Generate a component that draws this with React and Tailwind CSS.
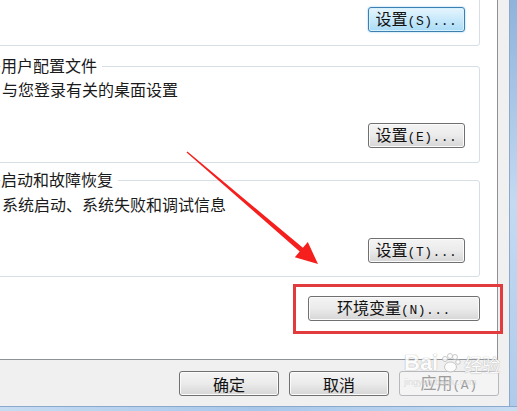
import React from "react";

function WinButton({ label, hotkey, variant = "normal", width = "w-[97px]" }) {
  const look =
    variant === "focus"
      ? "border-[#3c7fb1] bg-gradient-to-b from-[#e6f5fd] via-[#c8e9fb] to-[#a9dbf6] shadow-[inset_0_0_0_1px_#d9f1fd,0_0_2px_#7ec6ef] text-[#111]"
      : variant === "disabled"
      ? "border-[#b7b9bc] bg-[#f4f4f4] text-[#9c9c9c]"
      : "border-[#707070] bg-gradient-to-b from-[#f4f4f4] via-[#ebebeb] to-[#d6d6d6] shadow-[inset_0_0_0_1px_#fbfbfb] text-[#111]";
  return (
    <button
      className={`${width} h-[25px] shrink-0 rounded-[3px] border flex items-center justify-center text-[16px] ${look}`}
    >
      <span className="leading-[18px]">
        {label}
        {hotkey && (
          <span className="font-['Liberation_Mono',monospace] text-[13px] tracking-[0.5px]">
            {hotkey}
          </span>
        )}
      </span>
    </button>
  );
}

function GroupBox({ title, desc, button, className = "" }) {
  return (
    <div
      className={`relative -ml-3 mr-[17px] border border-[#d5dfe5] rounded-[3px] flex flex-col pl-[13px] pr-[14px] ${className}`}
    >
      {title && (
        <span className="absolute left-[12px] -top-[10px] bg-white pr-[5px] text-[16px] leading-[16px] text-[#1a1a1a]">
          {title}
        </span>
      )}
      {desc && <div className="text-[16px] leading-[16px] text-[#1a1a1a]">{desc}</div>}
      <div className="flex justify-end">{button}</div>
    </div>
  );
}

export default function App() {
  return (
    <div className="relative w-[517px] h-[411px] overflow-hidden flex flex-col bg-[#b8d3ee] font-['Noto_Sans_CJK_SC',sans-serif]">
      <div className="flex h-[406px]">
        <div className="w-[509px] bg-[#f0f0f0] flex flex-col">
          <div className="w-[498px] h-[360px] bg-white border-r border-b border-[#8e9196] flex flex-col">
            <GroupBox
              className="-mt-[20px] pt-[26px] pb-[13px]"
              button={<WinButton label="设置" hotkey="(S)..." variant="focus" />}
            />
            <GroupBox
              className="mt-[20px] pt-[14px] pb-[14px]"
              title="用户配置文件"
              desc="与您登录有关的桌面设置"
              button={
                <div className="mt-[26px]">
                  <WinButton label="设置" hotkey="(E)..." />
                </div>
              }
            />
            <GroupBox
              className="mt-[17px] pt-[15px] pb-[13px]"
              title="启动和故障恢复"
              desc="系统启动、系统失败和调试信息"
              button={
                <div className="mt-[26px]">
                  <WinButton label="设置" hotkey="(T)..." />
                </div>
              }
            />
            <div className="mt-[19px] mr-[17px] flex justify-end">
              <WinButton label="环境变量" hotkey="(N)..." width="w-[172px]" />
            </div>
          </div>
          <div className="flex justify-end gap-[10px] pt-[11px] pr-[10px]">
            <WinButton label="确定" width="w-[100px]" />
            <WinButton label="取消" width="w-[100px]" />
            <WinButton label="应用" hotkey="(A)" variant="disabled" width="w-[100px]" />
          </div>
        </div>
        <div className="flex-1 border-l border-[#8aa9cc] bg-gradient-to-b from-[#8fb3dc] via-[#c3daf1] to-[#aecbeb]" />
      </div>
      <div className="flex-1 border-t border-[#8aa9cc] bg-gradient-to-r from-[#c6dcf2] via-[#a7c7ea] to-[#c6dcf2]" />

      {/* red highlight box */}
      <div className="absolute left-[293px] top-[284px] w-[210px] h-[50px] border-[3px] border-[#e23b3d]" />

      {/* red arrow */}
      <svg className="absolute left-0 top-0 pointer-events-none" width="517" height="411">
        <polygon
          fill="#f5201d"
          points="187.4,151.5 302.9,247.8 307.8,242.1 318,264 294.8,257.3 299.7,251.6 186.6,152.5"
        />
      </svg>

      {/* watermark */}
      <div className="absolute left-[404px] top-[352px] flex flex-col items-start pointer-events-none opacity-80">
        <div className="flex items-end gap-[2px]">
          <span className="font-['Liberation_Sans',sans-serif] text-[22px] leading-[22px] font-bold text-white [text-shadow:0_0_1px_#a8a8a8,0_0_1px_#a8a8a8]">
            Bai
          </span>
          <svg width="22" height="22" viewBox="0 0 22 22">
            <g fill="#fff" stroke="#bdbdbd" strokeWidth="1">
              <circle cx="5" cy="7" r="2.5" />
              <circle cx="10" cy="4" r="2.5" />
              <circle cx="15" cy="5" r="2.5" />
              <circle cx="18" cy="10" r="2.3" />
              <ellipse cx="10.5" cy="15" rx="6" ry="5" />
            </g>
          </svg>
          <span className="text-[18px] leading-[20px] text-white [text-shadow:0_0_1px_#a8a8a8,0_0_1px_#a8a8a8]">
            经验
          </span>
        </div>
        <span className="font-['Liberation_Sans',sans-serif] text-[9px] leading-[10px] mt-[3px] text-[#d6d6d6]">
          jingyan.baidu.com
        </span>
      </div>
    </div>
  );
}
